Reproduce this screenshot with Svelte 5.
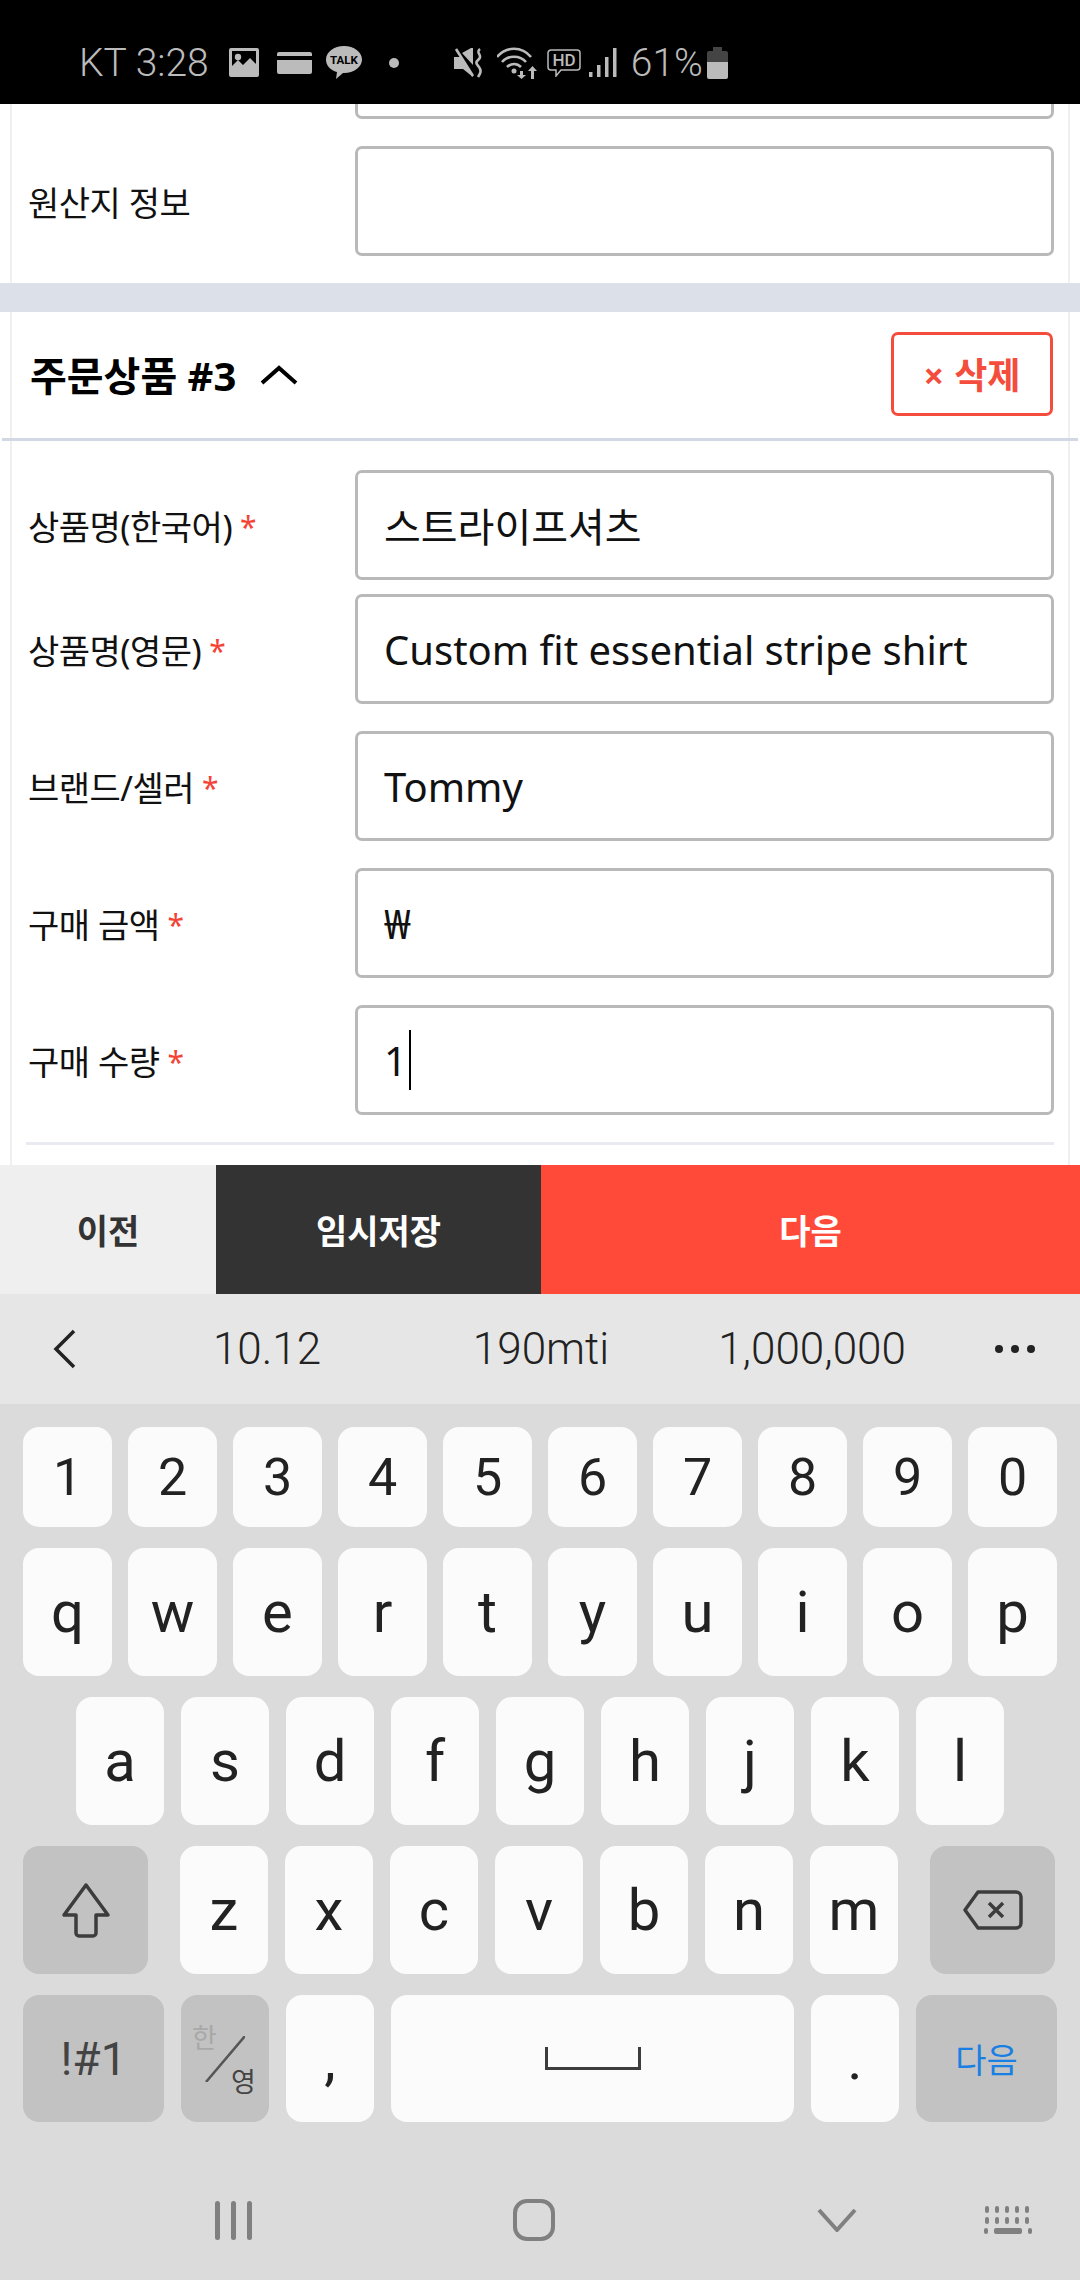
<script lang="ts">
  const fields = [
    { label: "상품명(한국어)", value: "스트라이프셔츠", tight: true },
    { label: "상품명(영문)", value: "Custom fit essential stripe shirt" },
    { label: "브랜드/셀러", value: "Tommy" },
    { label: "구매 금액", value: "₩" },
    { label: "구매 수량", value: "1", caret: true },
  ];
  const digits = "1234567890".split("");
  const row2 = "qwertyuiop".split("");
  const row3 = "asdfghjkl".split("");
  const row4 = "zxcvbnm".split("");
</script>

<div class="screen">
  <header class="status">
    <span class="status-text">KT 3:28</span>
    <svg class="ic-pic" width="30" height="29" viewBox="0 0 30 29">
      <path fill="#bbb" fill-rule="evenodd" d="M2 0h26a2 2 0 0 1 2 2v25a2 2 0 0 1-2 2H2a2 2 0 0 1-2-2V2a2 2 0 0 1 2-2zm1 3v15l6-6 5 5 7-7 6 6V3z"/>
      <circle cx="9" cy="9" r="3.2" fill="#bbb"/>
    </svg>
    <svg class="ic-card" width="35" height="22" viewBox="0 0 35 22">
      <path fill="#bbb" d="M2 0h31a2 2 0 0 1 2 2v2H0V2a2 2 0 0 1 2-2zM0 8h35v12a2 2 0 0 1-2 2H2a2 2 0 0 1-2-2z"/>
    </svg>
    <svg class="ic-talk" width="36" height="33" viewBox="0 0 36 33">
      <path fill="#bbb" d="M18 0c10 0 18 6 18 13.500S28 27 18 27l-1 0-7 6 1-7C4 24 0 19.500 0 13.500 0 6 8 0 18 0z"/>
      <text x="18" y="18" text-anchor="middle" class="talk">TALK</text>
    </svg>
    <span class="dot"></span>
    <svg class="ic-mute" width="30" height="30" viewBox="0 0 30 30">
      <path fill="#bbb" d="M0 9h6L4 5l15 22v2L9 21H0zM8 5l9-5h2v17z"/>
      <path fill="none" stroke="#bbb" stroke-width="2.600" d="M2 1l17 27M26 1c-5 4 3 6-1 10s-3 4 0 8 1 7-1 10"/>
    </svg>
    <svg class="ic-wifi" width="42" height="32" viewBox="0 0 42 32">
      <g fill="none" stroke="#bbb" stroke-width="2.600">
        <path d="M0 10c9-11 25-11 34 0M5 15c6-7 18-7 24 0M10 20c4-4 10-4 14 0"/>
      </g>
      <circle cx="17" cy="24" r="2.500" fill="#bbb"/>
      <path fill="#bbb" d="M23 24h3v4h3l-4.500 4-4.500-4h3zM34 32v-8h-3l4.500-5 4.500 5h-3v8z"/>
    </svg>
    <svg class="ic-hd" width="34" height="28" viewBox="0 0 34 28">
      <path fill="none" stroke="#bbb" stroke-width="1.500" d="M4 1h26a3 3 0 0 1 3 3v14a3 3 0 0 1-3 3H14l-5 6v-6H4a3 3 0 0 1-3-3V4a3 3 0 0 1 3-3z"/>
      <text x="17" y="17" text-anchor="middle" class="hd">HD</text>
    </svg>
    <svg class="ic-signal" width="28" height="29" viewBox="0 0 28 29">
      <path fill="#bbb" d="M0 24h3.500v5H0zM8 17h3.500v12H8zM16 9h3.500v20H16zM24 0h3.500v29H24z"/>
    </svg>
    <span class="status-text pct">61%</span>
    <svg class="ic-batt" width="21" height="32" viewBox="0 0 21 32">
      <path fill="#444" d="M6 0h9v4h4a2 2 0 0 1 2 2v9H0V6a2 2 0 0 1 2-2h4z"/>
      <path fill="#bbb" d="M0 15h21v15a2 2 0 0 1-2 2H2a2 2 0 0 1-2-2z"/>
    </svg>
  </header>

  <main class="form-area">
    <div class="card">
      <div class="row first"><span class="label"></span><div class="input"></div></div>
      <div class="row origin"><span class="label">원산지 정보</span><div class="input"></div></div>

      <div class="band"></div>
      <div class="section-head">
        <h2>주문상품 #3</h2>
        <svg class="chev" width="38" height="20" viewBox="0 0 38 20">
          <path d="M2 18L19 3l17 15" fill="none" stroke="#000" stroke-width="4"/>
        </svg>
        <button class="del"><span class="x">×</span>삭제</button>
      </div>

      <div class="fields">
        {#each fields as f}
          <div class="row" class:tight={f.tight}>
            <span class="label">{f.label}<i class="star">*</i></span>
            <div class="input">{f.value}{#if f.caret}<span class="caret"></span>{/if}</div>
          </div>
        {/each}
      </div>
      <div class="divider"></div>
    </div>

    <footer class="actions">
      <button class="prev">이전</button>
      <button class="save">임시저장</button>
      <button class="next">다음</button>
    </footer>
  </main>

  <div class="candidates">
    <svg class="back" width="24" height="40" viewBox="0 0 24 40">
      <path d="M22 2L4 20l18 18" fill="none" stroke="#222" stroke-width="3.500"/>
    </svg>
    <span class="c1">10.12</span>
    <span class="c2">190mti</span>
    <span class="c3">1,000,000</span>
    <span class="more"><b></b><b></b><b></b></span>
  </div>

  <section class="keyboard">
    <div class="keys digits">
      {#each digits as k}<span class="key wide">{k}</span>{/each}
    </div>
    <div class="keys letters">
      {#each row2 as k}<span class="key wide">{k}</span>{/each}
    </div>
    <div class="keys letters home">
      {#each row3 as k}<span class="key">{k}</span>{/each}
    </div>
    <div class="keys letters shiftrow">
      <span class="key fn shift">
        <svg width="50" height="56" viewBox="0 0 50 56">
          <path d="M25 3L3 33h12v18a3 3 0 0 0 3 3h14a3 3 0 0 0 3-3V33h12z" fill="none" stroke="#3c3c3c" stroke-width="3.500" stroke-linejoin="round"/>
        </svg>
      </span>
      {#each row4 as k}<span class="key">{k}</span>{/each}
      <span class="key fn shift">
        <svg width="60" height="40" viewBox="0 0 60 40">
          <path d="M15 2h38a5 5 0 0 1 5 5v26a5 5 0 0 1-5 5H15L2 20z" fill="none" stroke="#3c3c3c" stroke-width="3.500" stroke-linejoin="round"/>
          <path d="M26 13l14 14M40 13L26 27" fill="none" stroke="#3c3c3c" stroke-width="3.500"/>
        </svg>
      </span>
    </div>
    <div class="keys letters bottom">
      <span class="key fn sym">!#1</span>
      <span class="key fn lang">
        <i class="han">한</i>
        <svg width="40" height="46" viewBox="0 0 40 46"><path d="M40 0L1 46" stroke="#555" stroke-width="2.500"/></svg>
        <i class="eng">영</i>
      </span>
      <span class="key">,</span>
      <span class="key space">
        <svg width="96" height="23" viewBox="0 0 96 23">
          <path d="M1.500 0v21.500h93V0" fill="none" stroke="#3c3c3c" stroke-width="3"/>
        </svg>
      </span>
      <span class="key">.</span>
      <span class="key fn enter">다음</span>
    </div>

    <nav class="navbar">
      <span class="recents"><b></b><b></b><b></b></span>
      <span class="homebtn"></span>
      <svg class="hide" width="40" height="24" viewBox="0 0 40 24">
        <path d="M2 2l18 20L38 2" fill="none" stroke="#808080" stroke-width="4"/>
      </svg>
      <svg class="kbd" width="48" height="28" viewBox="0 0 48 28">
        <g fill="#808080">
          {#each [0, 10, 20, 30, 40] as x}
            <rect x={x + 1} y="0" width="4" height="7" rx="2"/>
            <rect x={x + 1} y="11" width="4" height="7" rx="2"/>
          {/each}
          <rect x="0" y="22" width="4" height="6" rx="2"/>
          <rect x="10" y="22" width="28" height="6" rx="2"/>
          <rect x="44" y="22" width="4" height="6" rx="2"/>
        </g>
      </svg>
    </nav>
  </section>
</div>

<style>
  :global(body) {
    margin: 0;
    background: #fff;
  }

  .screen {
    width: 1080px;
    height: 2280px;
    overflow: hidden;
    display: flex;
    flex-direction: column;
    font-family: "Noto Sans", "Noto Sans CJK KR", sans-serif;
    color: #111;
  }

  /* status bar */
  .status {
    height: 104px;
    flex: none;
    background: #000;
    display: flex;
    align-items: center;
    padding-left: 79px;
    box-sizing: border-box;
    padding-top: 21px;
  }
  .status-text {
    font-family: Roboto, sans-serif;
    font-weight: 300;
    font-size: 39px;
    color: #bbb;
  }
  .ic-pic { margin-left: 20px; }
  .ic-card { margin-left: 18px; }
  .ic-talk { margin-left: 14px; }
  .dot {
    width: 10px;
    height: 10px;
    border-radius: 50%;
    background: #bbb;
    margin-left: 27px;
  }
  .ic-mute { margin-left: 55px; }
  .ic-wifi { margin-left: 13px; }
  .ic-hd { margin-left: 8px; }
  .ic-signal { margin-left: 8px; }
  .pct { margin-left: 14px; }
  .ic-batt { margin-left: 4px; }
  .talk {
    font: 700 11.500px Roboto, sans-serif;
    fill: #000;
  }
  .hd {
    font: 500 17px Roboto, sans-serif;
    fill: #bbb;
  }

  /* form */
  .form-area {
    height: 1190px;
    flex: none;
    position: relative;
    overflow: hidden;
  }
  .card {
    margin: -95px 10px 0;
    height: 1231px;
    box-sizing: border-box;
    border: 2px solid #f0f0f0;
    border-top: 0;
    border-radius: 0 0 10px 10px;
    padding: 0 14px;
  }
  .row {
    display: flex;
    align-items: center;
    justify-content: space-between;
    margin-bottom: 27px;
  }
  .row.first {
    margin-bottom: 27px;
  }
  .row.origin {
    margin-bottom: 27px;
  }
  .row.tight {
    margin-bottom: 14px;
  }
  .label {
    font-size: 34px;
    letter-spacing: -0.5px;
    padding-left: 2px;
    color: #111;
  }
  .star {
    color: #f44336;
    font-style: normal;
    font-size: 30px;
    margin-left: 8px;
    position: relative;
    top: -2px;
  }
  .input {
    width: 699px;
    height: 110px;
    box-sizing: border-box;
    border: 3px solid #b9b9b9;
    border-radius: 7px;
    padding-left: 26px;
    display: flex;
    align-items: center;
    font-size: 40px;
    color: #111;
    background: #fff;
  }
  .caret {
    width: 2px;
    height: 60px;
    background: #000;
    margin-left: 2px;
  }

  .band {
    margin: 0 -26px;
    height: 29px;
    background: #dce0e9;
  }
  .section-head {
    margin: 0 -24px 29px;
    padding: 21px 25px 24px 28px;
    height: 129px;
    box-sizing: border-box;
    display: flex;
    align-items: center;
    border-bottom: 3px solid #d3d8e5;
  }
  h2 {
    margin: 0;
    font-size: 40px;
    font-weight: 700;
    color: #000;
  }
  .chev {
    margin-left: 24px;
    margin-top: 2px;
  }
  .del {
    margin-left: auto;
    width: 162px;
    height: 84px;
    box-sizing: border-box;
    border: 3px solid #f44d3d;
    border-radius: 7px;
    background: #fff;
    color: #f44d3d;
    font-family: inherit;
    font-size: 36px;
    font-weight: 700;
    padding: 0;
  }
  .del .x {
    margin-right: 10px;
  }
  .divider {
    height: 3px;
    background: #e9ebf1;
    margin-top: 27px;
    margin-right: 0;
  }

  /* bottom action buttons, they sit over the form */
  .actions {
    position: absolute;
    left: 0;
    right: 0;
    bottom: 0;
    height: 129px;
    display: flex;
  }
  .actions button {
    border: 0;
    padding: 0;
    font-family: inherit;
    font-size: 34px;
    font-weight: 700;
  }
  .prev {
    width: 216px;
    background: rgba(238, 238, 238, 0.96);
    color: #333;
  }
  .save {
    width: 325px;
    background: #333;
    color: #fff;
  }
  .next {
    flex: 1;
    background: rgba(255, 68, 51, 0.97);
    color: #fff;
  }

  /* suggestions */
  .candidates {
    height: 110px;
    flex: none;
    background: #e6e6e6;
    display: flex;
    align-items: center;
    font-family: Roboto, sans-serif;
    font-weight: 300;
    font-size: 44px;
    color: #222;
    text-align: center;
  }
  .back {
    margin-left: 52px;
    width: 24px;
    margin-right: 28px;
  }
  .c1 { width: 326px; }
  .c2 { width: 222px; }
  .c3 { width: 320px; }
  .more {
    display: flex;
    gap: 8px;
    margin-left: 23px;
  }
  .more b {
    width: 8px;
    height: 8px;
    border-radius: 50%;
    background: #222;
  }

  /* keyboard */
  .keyboard {
    flex: 1;
    background: #dbdbdb;
    padding-top: 23px;
    display: flex;
    flex-direction: column;
  }
  .keys {
    display: flex;
    gap: 17px;
    padding-left: 23px;
    height: 128px;
    margin-bottom: 21px;
    font-family: Roboto, sans-serif;
    font-size: 58px;
    color: #222;
  }
  .keys.digits {
    height: 100px;
    gap: 16px;
    font-size: 52px;
  }
  .keys.letters .wide {
    width: 89px;
  }
  .keys.letters:not(.home):not(.shiftrow):not(.bottom) {
    gap: 16px;
  }
  .keys.home {
    padding-left: 76px;
  }
  .keys.bottom {
    margin-bottom: 0;
    height: 127px;
  }
  .key {
    width: 88px;
    flex: none;
    background: #fbfbfb;
    border-radius: 16px;
    display: flex;
    align-items: center;
    justify-content: center;
    position: relative;
  }
  .key.wide {
    width: 89px;
  }
  .key.fn {
    background: #c2c2c2;
    color: #444;
  }
  .key.shift {
    width: 125px;
  }
  .shiftrow .shift:first-child {
    margin-right: 15px;
  }
  .shiftrow .shift:last-child {
    margin-left: 15px;
  }
  .key.sym {
    width: 141px;
    font-size: 46px;
  }
  .key.space {
    width: 403px;
  }
  .key.enter {
    width: 141px;
    font-family: "Noto Sans CJK KR", sans-serif;
    font-size: 34px;
    color: #1a7fe3;
  }
  .han,
  .eng {
    position: absolute;
    font: normal 27px "Noto Sans CJK KR", sans-serif;
  }
  .han {
    left: 11px;
    top: 22px;
    color: #a8a8a8;
  }
  .eng {
    left: 50px;
    top: 66px;
    color: #444;
  }

  .navbar {
    margin-top: 77px;
    display: flex;
    align-items: center;
    height: 42px;
  }
  .recents {
    margin-left: 215px;
    display: flex;
    gap: 11px;
  }
  .recents b {
    width: 5px;
    height: 39px;
    border-radius: 3px;
    background: #808080;
  }
  .homebtn {
    margin-left: 261px;
    width: 42px;
    height: 42px;
    box-sizing: border-box;
    border: 4px solid #808080;
    border-radius: 14px;
  }
  .hide {
    margin-left: 262px;
  }
  .kbd {
    margin-left: 127px;
  }
</style>
